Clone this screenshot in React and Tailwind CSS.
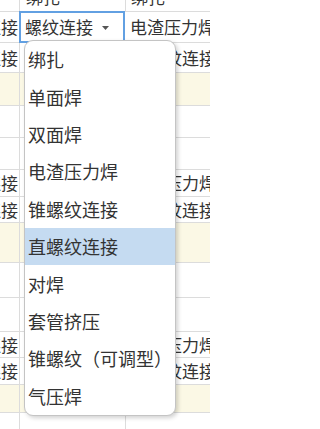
import React from 'react';

const rows = [
  { h: 'h-[31px]', a: '螺纹连接', c: '电渣压力焊', sel: true },
  { h: 'h-[30px]', a: '螺纹连接', c: '锥螺纹连接' },
  { h: 'h-[33px]', yellow: true },
  { h: 'h-[32px]' },
  { h: 'h-[32px]' },
  { h: 'h-[27px]', a: '螺纹连接', c: '电渣压力焊' },
  { h: 'h-[26px]', a: '螺纹连接', c: '锥螺纹连接' },
  { h: 'h-[40px]', yellow: true },
  { h: 'h-[35px]' },
  { h: 'h-[34px]' },
  { h: 'h-[26px]', a: '螺纹连接', c: '电渣压力焊' },
  { h: 'h-[27px]', a: '螺纹连接', c: '锥螺纹连接' },
  { h: 'h-[28px]', yellow: true },
  { h: 'h-[40px]' },
];

const options = ['绑扎', '单面焊', '双面焊', '电渣压力焊', '锥螺纹连接', '直螺纹连接', '对焊', '套管挤压', '锥螺纹（可调型）', '气压焊'];

const App = () => {
  return (
    <div className="relative w-[210px] h-[429px] overflow-hidden bg-white text-[#333] text-[17px] font-['Noto_Sans_CJK_SC',sans-serif]">
      {/* top row, mostly scrolled out */}
      <div className="flex h-[12px] border-b border-[#dcdcdc] overflow-hidden">
        <div className="w-[20px] shrink-0 border-r border-[#dcdcdc]" />
        <div className="w-[106px] shrink-0 border-r border-[#dcdcdc] flex items-end pl-[6px]">
          <span className="leading-[31px] mb-[-1px] whitespace-nowrap">绑扎</span>
        </div>
        <div className="flex-1 flex items-end pl-[5px]">
          <span className="leading-[31px] mb-[-1px] whitespace-nowrap">绑扎</span>
        </div>
      </div>

      {rows.map((r, i) => (
        <div key={i} className={`flex ${r.h} border-b border-[#dcdcdc] ${r.yellow ? 'bg-[#fbf8e5]' : ''}`}>
          <div className="w-[20px] shrink-0 border-r border-[#dcdcdc] overflow-hidden flex items-center justify-end pr-[1px]">
            {r.a && <span className="whitespace-nowrap">{r.a}</span>}
          </div>
          {r.sel ? (
            <div className="w-[106px] shrink-0 border-2 border-[#62a0e2] -mt-[1px] -ml-[1px] -mb-[1px] flex items-center pl-[4px] pr-[14px] justify-between">
              <span className="whitespace-nowrap">螺纹连接</span>
              <svg width="7" height="4" viewBox="0 0 7 4" className="mt-[1px]">
                <path d="M0 0 L7 0 L3.5 4 Z" fill="#555" />
              </svg>
            </div>
          ) : (
            <div className="w-[106px] shrink-0 border-r border-[#dcdcdc]" />
          )}
          <div className="flex-1 overflow-hidden flex items-center pl-[5px]">
            {r.c && <span className="whitespace-nowrap">{r.c}</span>}
          </div>
        </div>
      ))}

      {/* dropdown list */}
      <div className="absolute left-[24px] top-[40px] w-[152px] bg-white border border-[#c4c4c4] rounded-[9px] shadow-[2px_2px_4px_rgba(0,0,0,0.18)] overflow-hidden">
        {options.map((o) => (
          <div
            key={o}
            className={`h-[37.4px] flex items-center pl-[3px] text-[18px] whitespace-nowrap ${o === '直螺纹连接' ? 'bg-[#c5dbf1]' : ''}`}
          >
            {o}
          </div>
        ))}
      </div>
    </div>
  );
};

export default App;
